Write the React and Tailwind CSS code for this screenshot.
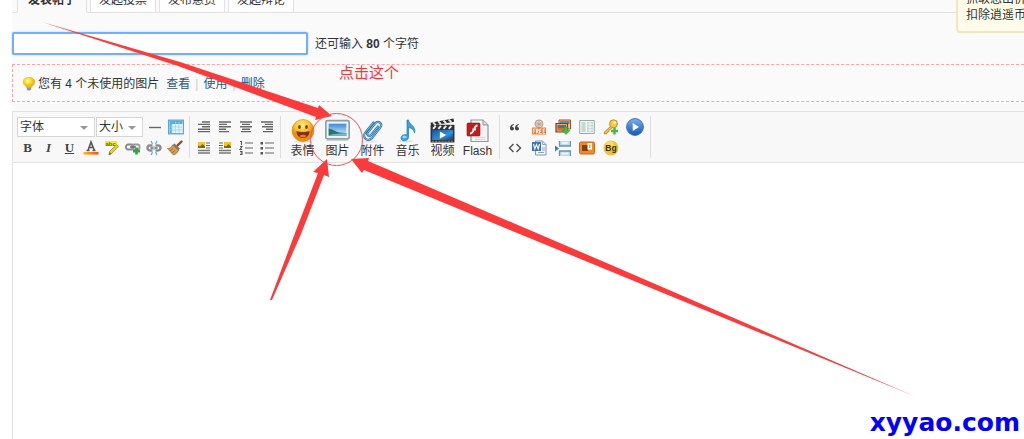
import clsx from 'clsx';

const tabs = ['发表帖子', '发起投票', '发布悬赏', '发起辩论'];

const Svg = ({ size = 16, box = 16, children }) => (
  <svg width={size} height={size} viewBox={`0 0 ${box} ${box}`} fill="none" aria-hidden="true">
    {children}
  </svg>
);

// --- small icons ---
const HrIcon = () => (
  <Svg><path d="M2 8.5h12" stroke="#666" strokeWidth="1.4" /></Svg>
);

const TableIcon = () => (
  <Svg>
    <rect x="0.7" y="1.2" width="14.6" height="13.6" fill="#fff" stroke="#5fa3c7" strokeWidth="1.3" />
    <path d="M1.5 2h13v3h-13zM1.5 5h2.5v9h-2.5z" fill="#4db4e6" />
    <path d="M4 5h10.5v9H4z" fill="#e4f4fb" />
    <path d="M4 5v9M7.5 3v11M11 3v11M2 8h12.5M2 11h12.5" stroke="#9fd4ec" strokeWidth="0.8" />
  </Svg>
);

const ColorIcon = () => (
  <Svg>
    <defs>
      <linearGradient id="fontColor"><stop stopColor="#fbb824" /><stop offset="1" stopColor="#f0501c" /></linearGradient>
    </defs>
    <path d="M3.5 10.5h3M9.5 10.5h3M5 10.5L8 2l3.4 8.5M6 7.5h4" stroke="#555" strokeWidth="1.6" />
    <path d="M.5 12h15v2.6H.5z" fill="url(#fontColor)" />
  </Svg>
);

const MarkerIcon = () => (
  <Svg>
    <path d="M1 1h12v5H1z" fill="#f5ec1d" />
    <text x="1.4" y="5.8" fontSize="6" fontWeight="700" fill="#6d6a16" fontFamily="Liberation Sans, sans-serif">abc</text>
    <path d="M5 15l.6-3.500L12.500 4.500l2 1.800-7 7.400z" fill="#edcf22" stroke="#938a43" strokeWidth="0.8" />
    <path d="M5 15l.5-3 2 1.900z" fill="#666" />
  </Svg>
);

const LinkIcon = () => (
  <Svg>
    <rect x="1" y="4.5" width="7.5" height="5" rx="2" stroke="#888" strokeWidth="1.8" />
    <rect x="7" y="4.5" width="7.5" height="5" rx="2" stroke="#9a9a9a" strokeWidth="1.8" />
    <path d="M5 7h6" stroke="#666" strokeWidth="1.4" />
    <path d="M11.5 7.6v7M8 11.1h7" stroke="#2da83a" strokeWidth="2.6" />
  </Svg>
);

const UnlinkIcon = () => (
  <Svg>
    <path d="M6.5 5.500H4a2.500 2.500 0 000 5h2.5M9.5 5.500H12a2.500 2.500 0 010 5H9.5" stroke="#8c8c8c" strokeWidth="2.400" />
    <path d="M4.5 8h2.500M9 8h2.500" stroke="#666" strokeWidth="1.4" />
    <path d="M5 1l1.5 3M11 1L9.5 4M5 15l1.5-3M11 15l-1.5-3M8 6v4" stroke="#62a8e2" strokeWidth="1.2" />
  </Svg>
);

const BroomIcon = () => (
  <Svg>
    <path d="M10.500 5.500l4-4" stroke="#8c4f24" strokeWidth="2.4" strokeLinecap="round" />
    <path d="M7.500 3.500l5.400 5-1.400 2L5.700 5z" fill="#7d7470" />
    <path d="M5.6 5L11.500 10.4c-1.2 2.600-3 4-5 4.600L.4 8.500c2 .1 3.800-.8 5.200-3.500z" fill="#d69a55" stroke="#9f642e" strokeWidth="0.7" />
    <path d="M3 11l3-2.500M5 13l3-2.800" stroke="#9f642e" strokeWidth="0.8" />
  </Svg>
);

const bars = {
  block: 'M6 3h8M2 5.400h12M6 7.800h8M2 10.200h12M2 12.600h12',
  left: 'M2 3h12M2 5.400h8M2 7.800h12M2 10.200h7M2 12.600h10',
  center: 'M2 3h12M4 5.400h8M2 7.800h12M4 10.200h8M3 12.600h10',
  right: 'M2 3h12M6 5.400h8M3 7.800h11M7 10.200h7M4 12.600h10',
};

const AlignIcon = ({ kind }) => (
  <Svg><path d={bars[kind]} stroke="#666" strokeWidth="1.4" /></Svg>
);

const FloatIcon = ({ right }) => (
  <Svg>
    <path d={right ? 'M2 3h4M2 5.500h4M2 8h4' : 'M10 3h4M10 5.500h4M10 8h4'} stroke="#666" strokeWidth="1.2" />
    <path d="M2 10.500h12M2 13h12" stroke="#777" strokeWidth="1.700" />
    <path d={right ? 'M7 2h7v6H7z' : 'M2 2h7v6H2z'} fill="#eec72b" />
    <path d={right ? 'M7 8V5.500l2 1 2.500-2.500L14 6.500V8z' : 'M2 8V5.500l2 1L6.500 4 9 6.500V8z'} fill="#7d6420" />
  </Svg>
);

const OrderedIcon = () => (
  <Svg>
    <path d="M7 3h8M7 8h8M7 13h8" stroke="#666" strokeWidth="1.2" />
    <path d="M2 1.500h1.500V5M2 6.500h2L2 9.500h2.200M2 11.500h2v3H2M2.500 13H4" stroke="#555" strokeWidth="1.100" />
  </Svg>
);

const BulletIcon = () => (
  <Svg>
    <path d="M6 3h9M6 8h9M6 13h9" stroke="#666" strokeWidth="1.2" />
    <path d="M1.500 2h2.500v2.500H1.500zM1.500 7h2.500v2.500H1.500zM1.500 12h2.500v2.500H1.500z" fill="#555" />
  </Svg>
);

const QuoteIcon = () => (
  <Svg>
    <path d="M7 5C4 5.500 3 7 3 9.500c0 2.600 4 2.400 4 .2C7 8.500 6.200 8 5.200 8c0-1.200.8-1.800 1.800-2.200zM12 5C9 5.500 8 7 8 9.500c0 2.600 4 2.400 4 .2 0-1.200-.8-1.700-1.800-1.700 0-1.200.8-1.800 1.800-2.200z" fill="#444" />
  </Svg>
);

const CodeIcon = () => (
  <Svg><path d="M6.500 4L2.500 8l4 4M9.500 4l4 4-4 4" stroke="#555" strokeWidth="1.500" /></Svg>
);

const FreeIcon = () => (
  <Svg>
    <circle cx="8" cy="4.800" r="3.900" fill="#ecd9cc" stroke="#b39a8c" />
    <path d="M4 5h8M8 1v8M5 2.500l6 5M11 2.500l-6 5" stroke="#b39a8c" strokeWidth="0.7" />
    <path d="M1 8.500h14v7H1z" fill="#ee7d3c" />
    <path d="M2.500 14.500v-4.500h2M2.500 12h1.600M5.500 14.500V10h1.600v2H6l1.500 2.500M10.500 10H8.700v4.500h1.800M8.700 12h1.500M14 10h-1.800v4.500H14M12.200 12h1.500" stroke="#fff" strokeWidth="0.9" />
  </Svg>
);

const AlbumIcon = () => (
  <Svg>
    <path d="M4 1h11.500v9H4z" fill="#f6c58a" stroke="#9c552a" />
    <path d="M5 2h9.500v3H5z" fill="#5d8bb5" />
    <path d="M1 4.500h11.500v8.500H1z" fill="#edb16d" stroke="#7a3d1c" strokeWidth="1.2" />
    <path d="M2.500 6h8.500v3H2.500z" fill="#51718f" /><path d="M2.500 9h8.500v2.500H2.500z" fill="#d66a32" />
    <path d="M9.500 8h3.200v3.500H15l-4 4-4-4h2.500z" fill="#3fc43c" stroke="#278d2a" strokeWidth="0.5" />
  </Svg>
);

const ColumnsIcon = () => (
  <Svg>
    <path d="M.7 1.500h14.600v13H.7z" fill="#f1f7f6" stroke="#93aaa6" />
    <path d="M2.500 4h4M2.500 6h4M2.500 8h4M2.500 10h4M2.500 12h4" stroke="#9eb4b0" />
    <path d="M8 3h2.500v10H8zM11.500 3H14v10h-2.500z" fill="#c1d5d1" />
    <path d="M8.500 5H14M8.500 8H14M8.500 11H14" stroke="#fff" strokeWidth="0.7" />
  </Svg>
);

const KeyIcon = () => (
  <Svg>
    <path d="M7.500 7.500L1.200 13.200v1.600h2.600l.4-1.600 1.500-.3.300-1.500 3-2.400" fill="#f4c63a" stroke="#ad7b15" strokeWidth="0.8" />
    <circle cx="10.500" cy="4.800" r="4" fill="#f6cc42" stroke="#bb8418" strokeWidth="0.9" />
    <circle cx="11.800" cy="3.500" r="1.200" fill="#fff" />
    <path d="M11.500 8.500v7M8 12h7" stroke="#45b944" strokeWidth="2.500" />
  </Svg>
);

const PlayIcon = () => (
  <Svg size={18}>
    <defs>
      <linearGradient id="play" x2="0" y2="1"><stop stopColor="#79b2ec" /><stop offset="1" stopColor="#1556b4" /></linearGradient>
    </defs>
    <circle cx="8" cy="8" r="7.500" fill="url(#play)" stroke="#3b6cae" strokeWidth="0.8" />
    <path d="M6 4.500L11.500 8 6 11.500z" fill="#fff" />
  </Svg>
);

const WordIcon = () => (
  <Svg>
    <path d="M4.500 1h7L15 4.500V15H4.500z" fill="#f5f8fc" stroke="#8295ae" />
    <path d="M11.500 1v3.500H15M11 8h3M11 10h3M7 12.500h6" stroke="#8ba7cc" />
    <path d="M1 2h9v9H1z" fill="#4071bd" />
    <path d="M2.500 4l1.300 5 1.700-4.500L7.200 9l1.300-5" stroke="#fff" strokeWidth="1.100" />
  </Svg>
);

const PageBreakIcon = () => (
  <Svg>
    <path d="M4.500 1v5h11V1zM4.500 11h11v5h-11z" fill="#c3dbe8" />
    <path d="M4.500 1v5h11V1M4.500 16v-5h11v5" stroke="#6a94ae" strokeWidth="1.300" />
    <path d="M6.500 3h7M6.500 13.500h7" stroke="#f4fafd" strokeWidth="1.500" />
    <path d="M0 5.500l4 3-4 3z" fill="#2f7ec0" />
  </Svg>
);

const HideIcon = () => (
  <Svg>
    <rect x="0.500" y="2" width="15" height="12" rx="1.500" fill="#ee8b25" stroke="#cb6715" />
    <path d="M3 5h6v6H3z" fill="#8a3c0d" /><path d="M8.500 3H13v6.500H8.500z" fill="#fff" /><path d="M10 4.500h1.500V8H10z" fill="#f0a04a" />
  </Svg>
);

const BgIcon = () => (
  <Svg>
    <circle cx="8" cy="8" r="7.500" fill="#edc52a" />
    <circle cx="7" cy="5.500" r="4.500" fill="#f6db5c" />
    <text x="8" y="11" textAnchor="middle" fontSize="8.500" fontWeight="700" fill="#3c300b" fontFamily="Liberation Sans, sans-serif">Bg</text>
  </Svg>
);

const BulbIcon = () => (
  <Svg size={14}>
    <defs>
      <radialGradient id="bulb" cx=".4" cy=".35"><stop stopColor="#fffbd0" /><stop offset=".5" stopColor="#fde32b" /><stop offset="1" stopColor="#eeb812" /></radialGradient>
    </defs>
    <path d="M8 .5C0 .5-.5 8 5 11v1h6v-1C16.500 8 16 .5 8 .5z" fill="url(#bulb)" stroke="#dfab22" strokeWidth="0.600" />
    <path d="M5.500 12h5v2.500L9 15.500H7l-1.500-1z" fill="#8d98a5" />
  </Svg>
);

// --- large icons ---
const SmileIcon = () => (
  <Svg size={24} box={24}>
    <defs>
      <radialGradient id="smile" cx=".45" cy=".25"><stop stopColor="#ffef7b" /><stop offset=".65" stopColor="#fbc02f" /><stop offset="1" stopColor="#ed8b13" /></radialGradient>
    </defs>
    <ellipse cx="12" cy="22.500" rx="9" ry="1.200" fill="#ddd" />
    <circle cx="12" cy="11.500" r="11" fill="url(#smile)" stroke="#dc8a16" strokeWidth="0.600" />
    <ellipse cx="8.500" cy="8" rx="1.300" ry="1.900" fill="#68370a" /><ellipse cx="15.500" cy="8" rx="1.300" ry="1.900" fill="#68370a" />
    <path d="M5.500 12.200c4 1 9 1 13 0 0 9-13 9-13 0z" fill="#7c3508" />
    <path d="M8.500 17c2-1.800 5-1.800 7 0-1.500 1.900-5.500 1.900-7 0z" fill="#ef7a3a" />
  </Svg>
);

const PictureIcon = () => (
  <Svg size={25} box={24}>
    <defs>
      <linearGradient id="sky" x2="0" y2="1"><stop stopColor="#3a8bdc" /><stop offset="1" stopColor="#d9f2fa" /></linearGradient>
    </defs>
    <rect x="0.800" y="2.500" width="22.400" height="17.500" rx="1.500" fill="#eef2f2" stroke="#8ba1a3" strokeWidth="1.600" />
    <path d="M3.500 5.500h17v11.500h-17z" fill="url(#sky)" />
    <path d="M3.500 10c4 .5 6 2.500 10 4l7 .5V17h-17z" fill="#2c7566" />
    <path d="M7 15.500l13.500-1V17h-17z" fill="#72bed6" />
    <path d="M1.500 21.500h21" stroke="#c5cccc" />
  </Svg>
);

const ClipIcon = () => (
  <Svg size={24} box={24}>
    <ellipse cx="9" cy="22.500" rx="7" ry="1" fill="#e2e2e2" />
    <path d="M17 7.500l-7 8.500c-2 2.300-5-.2-3.200-2.500L14 4.500c3.200-3.700 8.200.2 5.200 4.200L11 19c-4 4.500-10.500-.6-6.800-5.400L12.500 3.500" stroke="#2c6ea7" strokeWidth="2.200" strokeLinecap="round" />
    <path d="M17 7.500l-7 8.500c-2 2.300-5-.2-3.200-2.500L14 4.500c3.200-3.700 8.200.2 5.200 4.200L11 19c-4 4.500-10.500-.6-6.800-5.400L12.500 3.500" stroke="#7ec3f0" strokeLinecap="round" />
  </Svg>
);

const MusicIcon = () => (
  <Svg size={24} box={24}>
    <ellipse cx="10" cy="22.300" rx="7" ry="1.100" fill="#ddd" />
    <path d="M11 1h1.500c.2 4.500 8 6 6 13-.2-3-3-5-6-5.500V18c0 4.500-7.500 5-7.500 1 0-2.800 3.500-4 6-3z" fill="#38a2e9" stroke="#1b74bc" strokeWidth="0.700" />
    <ellipse cx="8.500" cy="18" rx="2" ry="1.200" fill="#9bdbfa" />
  </Svg>
);

const VideoIcon = () => (
  <Svg size={25} box={24}>
    <defs>
      <linearGradient id="video" x2="1" y2="1"><stop stopColor="#1a4fa1" /><stop offset=".6" stopColor="#2f93de" /><stop offset="1" stopColor="#153c76" /></linearGradient>
    </defs>
    <path d="M.5 6.500h23v17H.5z" fill="#333" />
    <path d="M.5 4.500L22.500.5l.7 3L1.200 7.500z" fill="#2d2d2d" />
    <path d="M3 4.200l2.500 2.600M8 3.300l2.500 2.600M13 2.400L15.500 5M18 1.500L20.500 4M3 10.500L5.500 7.500M8 10.500l2.500-3M13 10.500l2.500-3M18 10.500l2.500-3" stroke="#eee" strokeWidth="1.800" />
    <path d="M2 11.500h20v9.500H2z" fill="url(#video)" />
    <path d="M9.500 13l6 3.300-6 3.300z" fill="#fff" />
    <path d="M2 22.300h20" stroke="#999" strokeWidth="0.800" strokeDasharray="2 1" />
  </Svg>
);

const FlashIcon = () => (
  <Svg size={24} box={24}>
    <path d="M5 1h12l5 5v16.500H5z" fill="#f3f5f5" stroke="#8b9a9a" strokeWidth="1.200" />
    <path d="M17 1v5h5" fill="#d5dddd" stroke="#8b9a9a" />
    <path d="M9 18.500h10M9 20.500h10" stroke="#d0d7d7" />
    <rect x="1" y="4" width="13" height="13" rx="1" fill="#c51a1a" stroke="#970e0e" strokeWidth="0.600" />
    <path d="M11.500 6.500C7.500 6.500 8.500 14.500 4 14.500M6.500 10.500H10" stroke="#fff" strokeWidth="1.800" />
  </Svg>
);

const firstRow = [
  ['分隔线', <HrIcon />],
  ['表格', <TableIcon />],
];

const letter = "font-['Liberation_Serif',serif] text-[13px]";

const textTools = [
  ['粗体', <b className={letter}>B</b>],
  ['斜体', <b className={clsx(letter, 'italic')}>I</b>],
  ['下划线', <b className={clsx(letter, 'underline')}>U</b>],
  ['文字颜色', <ColorIcon />],
  ['背景色', <MarkerIcon />],
  ['链接', <LinkIcon />],
  ['移除链接', <UnlinkIcon />],
  ['清除格式', <BroomIcon />],
];

const alignTools = [
  ['自动排版', <AlignIcon kind="block" />],
  ['居左', <AlignIcon kind="left" />],
  ['居中', <AlignIcon kind="center" />],
  ['居右', <AlignIcon kind="right" />],
  ['左浮动', <FloatIcon />],
  ['右浮动', <FloatIcon right />],
  ['排序列表', <OrderedIcon />],
  ['无序列表', <BulletIcon />],
];

const mediaTools = [
  ['表情', SmileIcon],
  ['图片', PictureIcon],
  ['附件', ClipIcon],
  ['音乐', MusicIcon],
  ['视频', VideoIcon],
  ['Flash', FlashIcon],
];

const extraTools = [
  ['引用', <QuoteIcon />],
  ['免费信息', <FreeIcon />],
  ['远程图片', <AlbumIcon />],
  ['目录', <ColumnsIcon />],
  ['密码', <KeyIcon />],
  ['播放器', <PlayIcon />],
  ['代码', <CodeIcon />],
  ['Word', <WordIcon />],
  ['分页', <PageBreakIcon />],
  ['隐藏内容', <HideIcon />],
  ['背景', <BgIcon />],
];

const Tool = ({ label, children }) => (
  <button type="button" aria-label={label} className="flex h-[21px] min-w-[21px] items-center justify-center text-[#444]">
    {children}
  </button>
);

const Picker = ({ label, text, className }) => (
  <div className={clsx('relative h-5 border border-[#d5d5d5] bg-white', className)}>
    <select aria-label={label} className="h-full w-full appearance-none bg-transparent pl-0.5 outline-none">
      <option>{text}</option>
    </select>
    <svg className="pointer-events-none absolute top-2 right-1.5" width="8" height="4" viewBox="0 0 8 4">
      <path d="M0 0h8L4 4z" fill="#999" />
    </svg>
  </div>
);

const Toolbar = () => (
  <div className="flex items-center border-y border-[#e2e2e2] bg-[#f8f8f8] py-[3px] pl-px">
    <div className="border-r border-[#ddd] px-[3px]">
      <div className="flex items-center gap-px">
        <Picker label="字体" text="字体" className="w-[78px]" />
        <Picker label="大小" text="大小" className="w-[47px]" />
        <div className="flex">
          {firstRow.map(([label, icon]) => <Tool key={label} label={label}>{icon}</Tool>)}
        </div>
      </div>
      <div className="flex">
        {textTools.map(([label, icon]) => <Tool key={label} label={label}>{icon}</Tool>)}
      </div>
    </div>
    <div className="grid grid-cols-4 border-r border-[#ddd] px-[3px]">
      {alignTools.map(([label, icon]) => <Tool key={label} label={label}>{icon}</Tool>)}
    </div>
    <div className="flex border-r border-[#ddd] px-1">
      {mediaTools.map(([label, Icon]) => (
        <button key={label} type="button" className="flex h-11 w-[35px] flex-col items-center justify-end leading-4">
          <Icon />
          {label}
        </button>
      ))}
    </div>
    <div className="grid grid-cols-[repeat(6,24px)] border-r border-[#ddd] px-[3px]">
      {extraTools.map(([label, icon]) => <Tool key={label} label={label}>{icon}</Tool>)}
    </div>
  </div>
);

// hand drawn hints that point at the picture button
const Hints = () => (
  <div className="pointer-events-none absolute top-0 left-0 text-[#f33]">
    <svg width="1024" height="439" viewBox="0 0 1024 439">
      <g fill="#fb3b3b">
        <path d="M42 22L180 62L318 108L319 105L332 116L315 120L316 117L178 66Z" />
        <path d="M270 300L295 233L318 173L313 172L327 159L329 177L324 175L301 234L272 300Z" />
        <path d="M914 396L600 267L364 170L362 173L351 159L369 158L368 161L602 261Z" />
      </g>
      <circle cx="336.500" cy="139.500" r="26" fill="none" stroke="#e9545b" />
    </svg>
    <span className="absolute top-16 left-[339px] text-[15px] leading-[18px] whitespace-nowrap">点击这个</span>
  </div>
);

export default function App() {
  return (
    <div className="relative flex min-h-screen flex-col overflow-hidden bg-white pl-3 font-['Liberation_Sans','Noto_Sans_CJK_SC',sans-serif] text-xs text-[#333]">
      <div className="bg-[#fafafa]">
        <nav className="flex h-[13px] items-end gap-[3px] border-b border-[#e2e2e2] pl-[5px]">
          {tabs.map((tab, i) => (
            <a
              key={tab}
              href="#"
              className={clsx(
                '-mb-px flex h-[26px] shrink-0 items-center border border-[#e2e2e2]',
                i === 0 ? 'border-b-[#fafafa] bg-[#fafafa] px-[10px] font-bold' : 'bg-white px-2',
              )}
            >
              {tab}
            </a>
          ))}
        </nav>

        <div className="flex items-center gap-[7px] pt-[19px] pb-[9px]">
          <input
            type="text"
            aria-label="标题"
            className="h-[23px] w-[296px] rounded-xs border-2 border-[#73aff5] bg-white px-1 shadow-[0_0_2px_#9cc8fa] outline-none"
          />
          <span>还可输入 <strong>80</strong> 个字符</span>
        </div>

        <div className="mb-[9px] flex h-[38px] items-center border border-r-0 border-dashed border-[#ffa3a3] pt-0.5 pl-[9px]">
          <BulbIcon />
          <span className="pl-0.5">您有 4 个未使用的图片</span>
          <span className="flex items-center gap-[5px] pl-[7px] text-[#ccc]">
            <a href="#" className="text-[#335577]">查看</a>|
            <a href="#" className="text-[#335577]">使用</a>|
            <a href="#" className="text-[#335577]">删除</a>
          </span>
        </div>
      </div>

      <div className="flex flex-1 flex-col border-l border-[#e2e2e2]">
        <Toolbar />
        <textarea aria-label="内容" className="w-full flex-1 resize-none bg-white p-2 outline-none" />
      </div>

      <aside className="absolute top-0 right-0 flex h-[33px] w-[68px] flex-col justify-end overflow-hidden rounded-bl-[4px] border-b-2 border-l-2 border-[#f3e5bd] bg-[#fffdea] pb-2 pl-2 leading-4 whitespace-nowrap">
        <span>抓取您出价</span>
        <span>扣除逍遥币</span>
      </aside>

      <Hints />

      <span className="absolute right-1 bottom-0.5 font-['DejaVu_Sans',sans-serif] text-[25px] leading-7 font-bold text-[#00f]">xyyao.com</span>
    </div>
  );
}
